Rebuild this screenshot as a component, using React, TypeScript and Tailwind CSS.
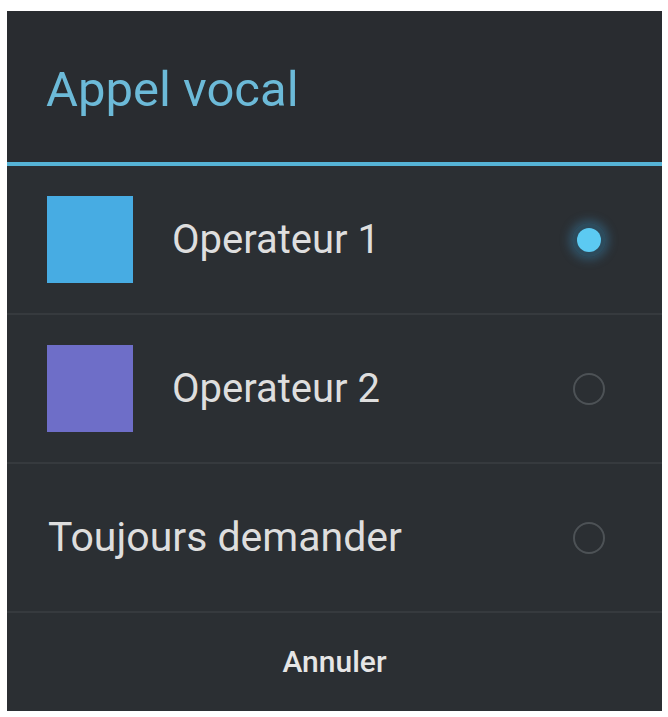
import React from "react";

type Option = {
  id: string;
  label: string;
  swatch?: string;
  selected?: boolean;
};

const options: Option[] = [
  { id: "op1", label: "Operateur 1", swatch: "bg-[#47ace3]", selected: true },
  { id: "op2", label: "Operateur 2", swatch: "bg-[#6e6ec8]" },
  { id: "ask", label: "Toujours demander" },
];

function Radio({ checked }: { checked?: boolean }) {
  if (checked) {
    return (
      <div className="w-[34px] h-[34px] rounded-full flex items-center justify-center bg-[#2f5f78]/60 shadow-[0_0_10px_3px_rgba(60,150,200,0.35)]">
        <div className="w-[24px] h-[24px] rounded-full bg-[#5ccaf2]" />
      </div>
    );
  }
  return <div className="w-[32px] h-[32px] rounded-full border-2 border-[#4d5256]" />;
}

export default function App() {
  return (
    <div className="min-h-screen bg-white pt-[11px] pl-[7px] pr-[6px] pb-[6px]" style={{ fontFamily: "Roboto, 'Liberation Sans', sans-serif" }}>
      <div className="w-[655px] h-[700px] bg-[#2b2f33] flex flex-col">
        {/* Header */}
        <div className="h-[151px] flex items-center pl-[39px] pt-[6px] bg-[#292c30]">
          <span className="text-[49px] leading-none text-[#6cbad8]">Appel vocal</span>
        </div>
        <div className="h-[4px] bg-[#55b3d6]" />

        {/* Options */}
        {options.map((opt) => (
          <div key={opt.id} className="flex flex-col">
            <div className="h-[147px] flex items-center">
              {opt.swatch ? (
                <>
                  <div className={`ml-[40px] w-[86px] h-[87px] ${opt.swatch}`} />
                  <span className="ml-[39px] text-[40px] leading-none text-[#dedede]">{opt.label}</span>
                </>
              ) : (
                <span className="ml-[41px] text-[41px] leading-none text-[#dedede]">{opt.label}</span>
              )}
              <div className="ml-auto mr-[56px] w-[34px] flex justify-center">
                <Radio checked={opt.selected} />
              </div>
            </div>
            <div className="h-[2px] bg-[#363a3e]" />
          </div>
        ))}

        {/* Cancel */}
        <div className="flex-1 flex items-center justify-center">
          <span className="text-[30px] leading-none font-medium text-[#e6e6e6]">Annuler</span>
        </div>
      </div>
    </div>
  );
}
